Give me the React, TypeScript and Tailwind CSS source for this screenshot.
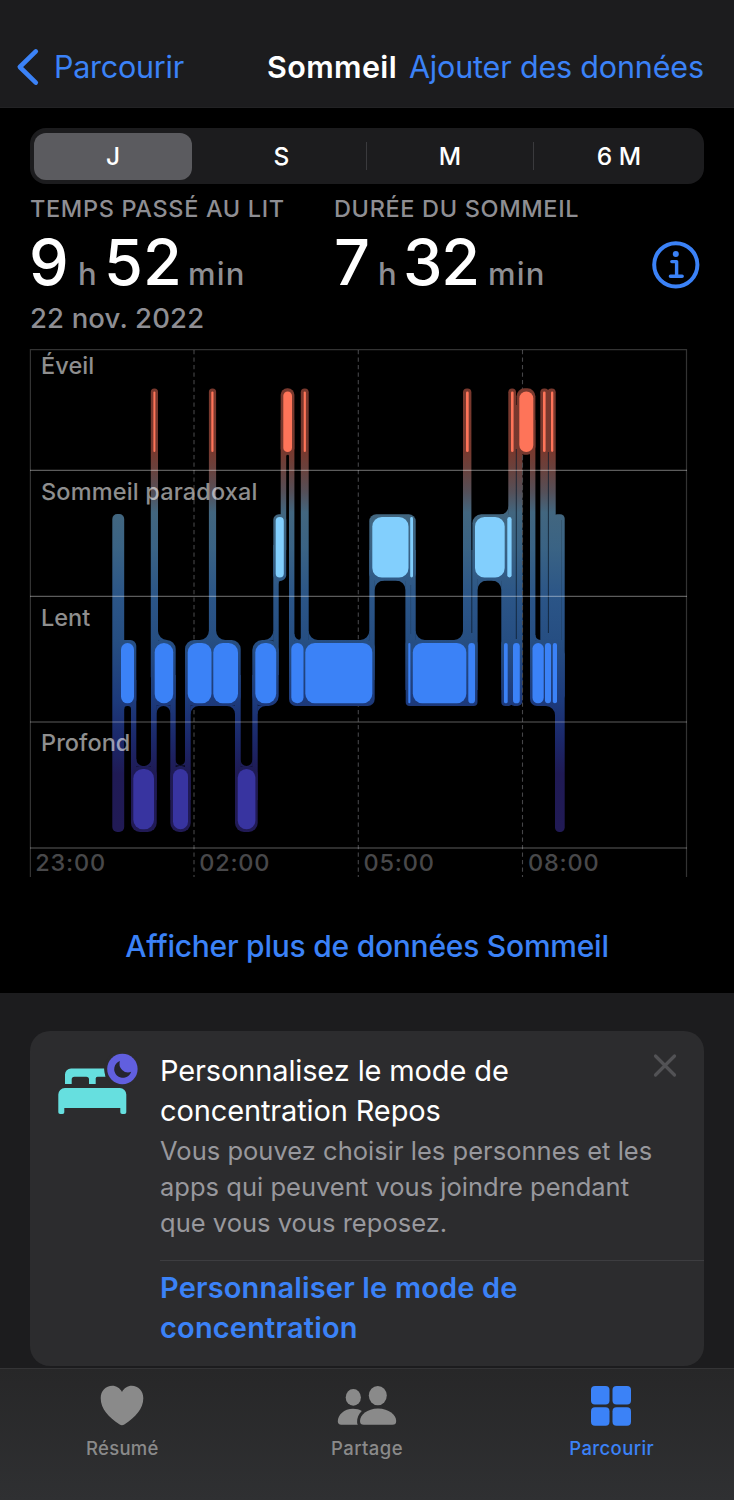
import type { ReactNode } from "react";

type Box = { x1: number; y1: number; x2: number; y2: number; r: number };
type Bar = [x1: number, x2: number];

const box = (x1: number, y1: number, x2: number, y2: number, r = 0): Box => ({ x1, y1, x2, y2, r });

const AWAKE = { top: 391.5, bottom: 452 };
const REM = { top: 517, bottom: 577.5 };
const CORE = { top: 643, bottom: 703.3 };
const DEEP = { top: 769, bottom: 829.3 };

const awakeBars: Bar[] = [
  [153.4, 155.4], [211.3, 213.5], [283.3, 292], [303.7, 305.9], [466, 468.7],
  [511, 513.6], [519.3, 533.3], [543, 545.6], [551, 553.3],
];
const remBars: Bar[] = [[275.7, 283.8], [372.3, 408.5], [410.2, 413], [475, 504.7], [507.3, 511.6]];
const coreBars: Bar[] = [
  [121, 134], [154.7, 173.2], [187.7, 211.5], [213.3, 238], [255.3, 276.2], [291.3, 303.5],
  [305.3, 372.3], [408.3, 410.4], [412.8, 466.3], [468.3, 475], [504, 507.7], [513, 519.8],
  [532.5, 543.7], [545, 551], [552.8, 557],
];
const deepBars: Bar[] = [[133.3, 154], [173, 188], [237.7, 255.4]];

/* Softly tinted outline that joins consecutive phases. */
const halo: Box[] = [
  box(112.3, 514, 124.2, 832, 5),
  box(118, 640, 136.3, 706, 6),
  box(131, 680, 136.3, 800),
  box(131, 766, 156.7, 832, 9),
  box(151, 670, 156.7, 800),
  box(150.8, 388.5, 158, 680, 3.5),
  box(151, 640, 175.7, 706, 9),
  box(170.3, 675, 175.7, 800),
  box(170.3, 766, 190.7, 832, 9),
  box(185, 675, 190.7, 800),
  box(185, 640, 240.7, 706, 9),
  box(208.9, 388.5, 216.1, 680, 3.5),
  box(235, 675, 240.7, 800),
  box(235, 766, 257.7, 832, 9),
  box(252.3, 675, 257.7, 800),
  box(252.3, 640, 278.7, 706, 10),
  box(273.3, 545, 278.7, 675),
  box(273.3, 514.3, 286.2, 580.7, 5.5),
  box(280.7, 420, 286.2, 550),
  box(280.7, 388.3, 294.4, 454.7, 6.5),
  box(289, 420, 294.4, 675),
  box(289, 640, 374.7, 706, 7),
  box(300.8, 388.5, 308.7, 680, 3.8),
  box(369.3, 550, 374.7, 680),
  box(369.3, 514.3, 415.7, 580.7, 7),
  box(405.4, 550, 415.7, 690),
  box(405.7, 640, 477.5, 706, 4),
  box(463, 388.5, 471.4, 680, 4),
  box(471, 550, 477.6, 690),
  box(472.3, 514.3, 516, 580.7, 9),
  box(508.3, 388.5, 516, 560, 3.8),
  box(501.3, 550, 522.4, 690),
  box(501.3, 640, 512, 706, 4),
  box(509.5, 640, 522.4, 706, 5),
  box(515, 450, 522.4, 640),
  box(516.5, 388.3, 535.4, 454.7, 8),
  box(515, 405, 522, 454),
  box(530, 420, 535.4, 675),
  box(530, 640, 562, 706, 7),
  box(540.3, 388.5, 548.6, 680, 3.8),
  box(547.5, 388.5, 555.7, 680, 3.8),
  box(546, 400, 550, 680),
  box(553, 514.3, 564.7, 700, 4.5),
  box(555, 650, 564.7, 832, 4.5),
];

/* Concave corners: x, y, horizontal direction, vertical direction, radius. */
const fillets: [number, number, number, number, number][] = [
  [158, 640, 1, -1, 9],
  [208.9, 640, -1, -1, 9], [216.1, 640, 1, -1, 9],
  [273.3, 640, -1, -1, 9],
  [294.4, 640, 1, -1, 6], [300.8, 640, -1, -1, 2],
  [308.7, 640, 1, -1, 9], [369.3, 640, -1, -1, 9],
  [415.7, 640, 1, -1, 9], [463, 640, -1, -1, 9],
  [535.4, 640, 1, -1, 5],
  [374.7, 580.5, 1, 1, 9], [405.4, 580.5, -1, 1, 9],
  [477.6, 580.5, 1, 1, 9], [501.3, 580.5, -1, 1, 9],
  [508.3, 514.5, -1, -1, 8],
  [278.7, 580.5, 1, 1, 3],
  [131, 706, -1, 1, 3], [124.2, 706, 1, 1, 3],
  [156.7, 706, 1, 1, 6.8], [170.3, 706, -1, 1, 6.8],
  [190.7, 706, 1, 1, 8], [235, 706, -1, 1, 8],
  [257.7, 706, 1, 1, 8],
  [136.3, 766.2, 1, -1, 7.3], [151, 766.2, -1, -1, 7.3],
  [175.7, 765, 1, -1, 4.6], [185, 765, -1, -1, 4.6],
  [240.7, 766, 1, -1, 5.8], [252.3, 766, -1, -1, 5.8],
  [555, 706, -1, 1, 9],
  [286.2, 454.5, 1, 1, 1.4], [289, 454.5, -1, 1, 1.4],
];

const filletPath = ([x, y, dx, dy, r]: [number, number, number, number, number]) =>
  `M${x - dx * 0.4} ${y - dy * 0.4}L${x + dx * r} ${y - dy * 0.4}L${x + dx * r} ${y}A${r} ${r} 0 0 ${dx * dy > 0 ? 0 : 1} ${x} ${y + dy * r}L${x - dx * 0.4} ${y + dy * r}Z`;

function Bars({ bars, band, fill }: { bars: Bar[]; band: { top: number; bottom: number }; fill: string }) {
  return (
    <g fill={fill}>
      {bars.map(([x1, x2]) => (
        <rect key={x1} x={x1} y={band.top} width={x2 - x1} height={band.bottom - band.top} rx={Math.min((x2 - x1) / 2, 9.5)} />
      ))}
    </g>
  );
}

function SleepChart() {
  return (
    <svg className="block h-[545px] w-[734px]" viewBox="0 340 734 545" fontFamily="Inter, sans-serif" fontWeight={500} fontSize={23.5}>
      <defs>
        <linearGradient id="phase" gradientUnits="userSpaceOnUse" x1="0" y1="388" x2="0" y2="832">
          <stop offset="0" stopColor="#79382d" />
          <stop offset="0.145" stopColor="#76392f" />
          <stop offset="0.19" stopColor="#664340" />
          <stop offset="0.235" stopColor="#545059" />
          <stop offset="0.28" stopColor="#42667f" />
          <stop offset="0.36" stopColor="#3a6384" />
          <stop offset="0.47" stopColor="#2b5587" />
          <stop offset="0.57" stopColor="#264e82" />
          <stop offset="0.7" stopColor="#1d3b7c" />
          <stop offset="0.79" stopColor="#1b286a" />
          <stop offset="0.87" stopColor="#1f1a54" />
          <stop offset="1" stopColor="#211a55" />
        </linearGradient>
      </defs>
      <g stroke="#636366" strokeOpacity="0.7" strokeWidth="1.1" strokeDasharray="4.2 3.3">
        <path d="M194 350V877M358.3 350V877M522.5 350V877" />
      </g>
      <g fill="url(#phase)">
        {halo.map((b, i) => (
          <rect key={i} x={b.x1} y={b.y1} width={b.x2 - b.x1} height={b.y2 - b.y1} rx={b.r} />
        ))}
        {fillets.map((f, i) => (
          <path key={i} d={filletPath(f)} />
        ))}
      </g>
      <g stroke="#0c1c2b" strokeOpacity="0.85" strokeWidth="0.9">
        <path d="M471.8 520V633M516.3 449V639M548.4 452V633" />
      </g>
      <path d="M410.7 585V634M561.5 520V640" stroke="#0c1c2b" strokeOpacity="0.25" strokeWidth="0.8" />
      <Bars bars={awakeBars} band={AWAKE} fill="#fe7459" />
      <Bars bars={remBars} band={REM} fill="#82cffd" />
      <Bars bars={coreBars} band={CORE} fill="#3b82f7" />
      <Bars bars={deepBars} band={DEEP} fill="#3834a0" />
      <path d="M522.5 456V706" stroke="#48484a" strokeWidth="1" strokeDasharray="4.2 3.3" />
      <g stroke="#ffffff" strokeWidth="1.2">
        <path d="M30 470.3H687M30 596.3H687M30 722H687M30 848H687" strokeOpacity="0.36" />
        <path d="M30 349.6H687M30.4 349V877M686.5 349V877" strokeOpacity="0.2" />
      </g>
      <g fill="#ffffff" fillOpacity="0.56">
        <text x="41" y="374.3" letterSpacing="0.1">Éveil</text>
        <text x="41" y="499.6" letterSpacing="0.15">Sommeil paradoxal</text>
        <text x="41" y="625.7" letterSpacing="0">Lent</text>
        <text x="41" y="751.2" letterSpacing="0.05">Profond</text>
      </g>
      <g fill="#48484a" letterSpacing="0.8">
        <text x="35.2" y="871">23:00</text>
        <text x="199.2" y="871">02:00</text>
        <text x="363.5" y="871">05:00</text>
        <text x="528" y="871">08:00</text>
      </g>
    </svg>
  );
}

function Num({ children, className }: { children: string; className: string }) {
  return <span className={`inline-block shrink-0 text-[63px] font-medium text-white ${className}`}>{children}</span>;
}

function Unit({ children, className = "" }: { children: string; className?: string }) {
  return <span className={`inline-block shrink-0 text-[31px] font-medium text-[#8e8e93] ${className}`}>{children}</span>;
}

function Tab({ label, className, children }: { label: string; className: string; children: ReactNode }) {
  return (
    <button className={`flex flex-1 flex-col items-center text-[18.5px] leading-6 font-medium ${className}`}>
      {children}
      <span className="mt-[7px]">{label}</span>
    </button>
  );
}

export default function App() {
  return (
    <div className="flex h-[1500px] w-[734px] flex-col overflow-hidden bg-black font-[Inter,sans-serif] text-white">
      <header className="h-[108px] shrink-0 border-b border-[#222224] bg-[#1c1c1e] pt-[47px] text-[30.5px] leading-[40px] whitespace-nowrap text-[#3b82f7]">
        <div className="flex items-center">
          <button className="flex w-[267px] shrink-0 items-center pl-[15px]">
            <svg className="h-10 w-[26px]" viewBox="0 0 26 40" fill="none" stroke="currentColor" strokeWidth="4.6" strokeLinecap="round" strokeLinejoin="round">
              <path d="M20.8 4.4 4.8 20l16 15.600" />
            </svg>
            <span className="ml-[13px] tracking-[-0.25px]">Parcourir</span>
          </button>
          <h1 className="w-[142px] shrink-0 font-semibold tracking-[0.4px] text-white">Sommeil</h1>
          <button className="tracking-[-0.17px]">Ajouter des données</button>
        </div>
      </header>

      <nav className="mx-[30px] mt-[20px] flex h-[56px] shrink-0 items-center rounded-[16px] bg-[#1c1c1e] text-center text-[24.5px] leading-[28px] font-medium">
        <button className="ml-[4px] flex h-[47px] w-[158px] items-center justify-center rounded-[12px] bg-[#5b5b5f]">J</button>
        <button className="ml-[5px] w-[169px]">S</button>
        <button className="w-[167px] border-l-[1.5px] border-[#3a3a3d]">M</button>
        <button className="flex-1 border-l-[1.5px] border-[#3a3a3d]">6 M</button>
      </nav>

      <section className="flex h-[156px] shrink-0 pl-[30px] whitespace-nowrap">
        <div className="w-[304px]">
          <h2 className="mt-[9px] text-[23.5px] leading-8 font-medium tracking-[0.65px] text-[#8e8e93]">TEMPS PASSÉ AU LIT</h2>
          <div className="-ml-[1px] flex h-[74px] items-baseline leading-[74px]">
            <Num className="w-[49px]">9</Num>
            <Unit className="w-[26px]">h</Unit>
            <Num className="w-[84px]">52</Num>
            <Unit className="tracking-[1.2px]">min</Unit>
          </div>
          <p className="mt-[1px] text-[27.5px] leading-9 font-medium tracking-[0.15px] text-[#8e8e93]">22 nov. 2022</p>
        </div>
        <div className="w-[313px]">
          <h2 className="mt-[9px] text-[23.5px] leading-8 font-medium tracking-[0.65px] text-[#8e8e93]">DURÉE DU SOMMEIL</h2>
          <div className="flex h-[74px] items-baseline leading-[74px]">
            <Num className="w-[44px]">7</Num>
            <Unit className="w-[25px]">h</Unit>
            <Num className="w-[85px] tracking-[-1.2px]">32</Num>
            <Unit className="tracking-[1.2px]">min</Unit>
          </div>
        </div>
        <svg className="mt-[56px] ml-[4px] h-[50px] w-[50px]" viewBox="0 0 50 50" fill="none" stroke="#3b82f7">
          <circle cx="24.8" cy="24.8" r="21.6" strokeWidth="4" />
          <circle cx="24.8" cy="14" r="3" fill="#3b82f7" stroke="none" />
          <path d="M20.8 21.6h4.8v14.6M19.4 36.3h11.8" strokeWidth="3.4" strokeLinecap="round" strokeLinejoin="round" />
        </svg>
      </section>

      <div className="h-[545px] shrink-0">
        <SleepChart />
      </div>

      <div className="flex h-[108px] shrink-0 justify-center pt-[41px]">
        <button className="h-10 text-[30px] leading-10 font-medium tracking-[-0.24px] whitespace-nowrap text-[#3b82f7]">
          Afficher plus de données Sommeil
        </button>
      </div>

      <main className="h-[375px] shrink-0 bg-[#1c1c1e] px-[30px] pt-[38px]">
        <article className="flex h-[335px] rounded-[20px] bg-[#2c2c2e]">
          <svg className="mt-[19px] ml-[26px] h-[68px] w-[84px] shrink-0" viewBox="56 1050 84 68">
            <path fill="#66dfdf" d="M58.3 1094.5a6.5 6.5 0 0 1 6.5-6.5h55a6.5 6.5 0 0 1 6.5 6.5v17.8q0 1.8-1.8 1.8h-2.4q-1.8 0-1.8-1.8V1108H64.3v4.3q0 1.8-1.8 1.8h-2.4q-1.8 0-1.8-1.8z" />
            <path fill="#66dfdf" d="M65 1084v-9.5a6 6 0 0 1 6-6h33.5l1 8.3H97.5q-1.8 0-1.8 1.8v5.4H89v-4.4q0-2.8-2.8-2.8H74.5q-2.8 0-2.8 2.8v4.4z" />
            <circle cx="122.4" cy="1069" r="18.2" fill="#2c2c2e" />
            <circle cx="122.4" cy="1069" r="15.2" fill="#615fdf" />
            <path fill="#25252f" d="M119.9 1061a8.7 8.7 0 1 0 11.3 10.8a8.7 8.7 0 0 1-11.3-10.8z" />
          </svg>
          <div className="ml-[20px] flex-1 whitespace-nowrap">
            <div className="flex h-[99px] justify-between">
              <h3 className="mt-[20px] text-[29px] leading-[40px] tracking-[-0.13px]">
                Personnalisez le mode de
                <br />
                concentration Repos
              </h3>
              <button className="mt-[22px] mr-[26px] h-[26px] w-[26px]" aria-label="Fermer">
                <svg viewBox="0 0 26 26" stroke="#525255" strokeWidth="3.2" strokeLinecap="round">
                  <path d="M3.5 3 22.5 22M22.5 3 3.5 22" />
                </svg>
              </button>
            </div>
            <p className="mt-[3px] text-[25.5px] leading-[36px] tracking-[0.02px] text-[#98989d]">
              Vous pouvez choisir les personnes et les
              <br />
              apps qui peuvent vous joindre pendant
              <br />
              que vous vous reposez.
            </p>
            <div className="mt-[19px] border-t border-[#3d3d40] pt-[7px]">
              <button className="text-left text-[29px] leading-[40px] font-semibold tracking-[0.17px] text-[#3b82f7]">
                Personnaliser le mode de
                <br />
                concentration
              </button>
            </div>
          </div>
        </article>
      </main>

      <footer className="flex h-[132px] shrink-0 border-t border-[#343436] bg-linear-to-b from-[#272728] to-[#2f3032] pt-[15px] text-[#8a8a8a]">
        <Tab label="Résumé" className="tracking-[0.3px]">
          <svg className="h-[45px] w-[60px]" viewBox="0 0 60 45" fill="currentColor">
            <path d="M30 8C32 4.200 35.700 1.800 39.700 1.800 46.200 1.800 51.300 6.800 51.300 14.200 51.300 24.500 43.500 33.300 32.300 40.500Q30 42.100 27.700 40.500C16.500 33.300 8.700 24.500 8.700 14.200 8.700 6.800 13.800 1.800 20.300 1.800 24.300 1.800 28 4.200 30 8z" />
          </svg>
        </Tab>
        <Tab label="Partage" className="tracking-[0.4px]">
          <svg className="h-[45px] w-[60px]" viewBox="0 0 60 45" fill="currentColor">
            <ellipse cx="16.3" cy="13.4" rx="7.6" ry="8.4" />
            <ellipse cx="40.8" cy="11.6" rx="9" ry="9.7" />
            <path d="M.8 37.5C.8 31 7 24.8 16 24.800c3.500 0 6.500.800 8.800 2.300-3.300 3.200-4.900 7.200-4.700 11.100 0 .900.200 1.700.700 2.500H4.200C2 40.700.800 39.500.800 37.500z" />
            <path d="M23 36.900C23 31.400 30 24.600 41 24.600s18.200 6.800 18.200 12.300c0 2.600-1.200 3.800-3.800 3.800H26.800c-2.600 0-3.800-1.200-3.800-3.800z" />
          </svg>
        </Tab>
        <Tab label="Parcourir" className="text-[#3b82f7] tracking-[0.4px]">
          <svg className="h-[45px] w-[60px]" viewBox="0 0 60 45" fill="currentColor">
            <rect x="9" y="1.9" width="18.5" height="18.6" rx="4" />
            <rect x="30.5" y="1.9" width="18.5" height="18.6" rx="4" />
            <rect x="9" y="23.2" width="18.5" height="18.6" rx="4" />
            <rect x="30.5" y="23.2" width="18.5" height="18.6" rx="4" />
          </svg>
        </Tab>
      </footer>
    </div>
  );
}
